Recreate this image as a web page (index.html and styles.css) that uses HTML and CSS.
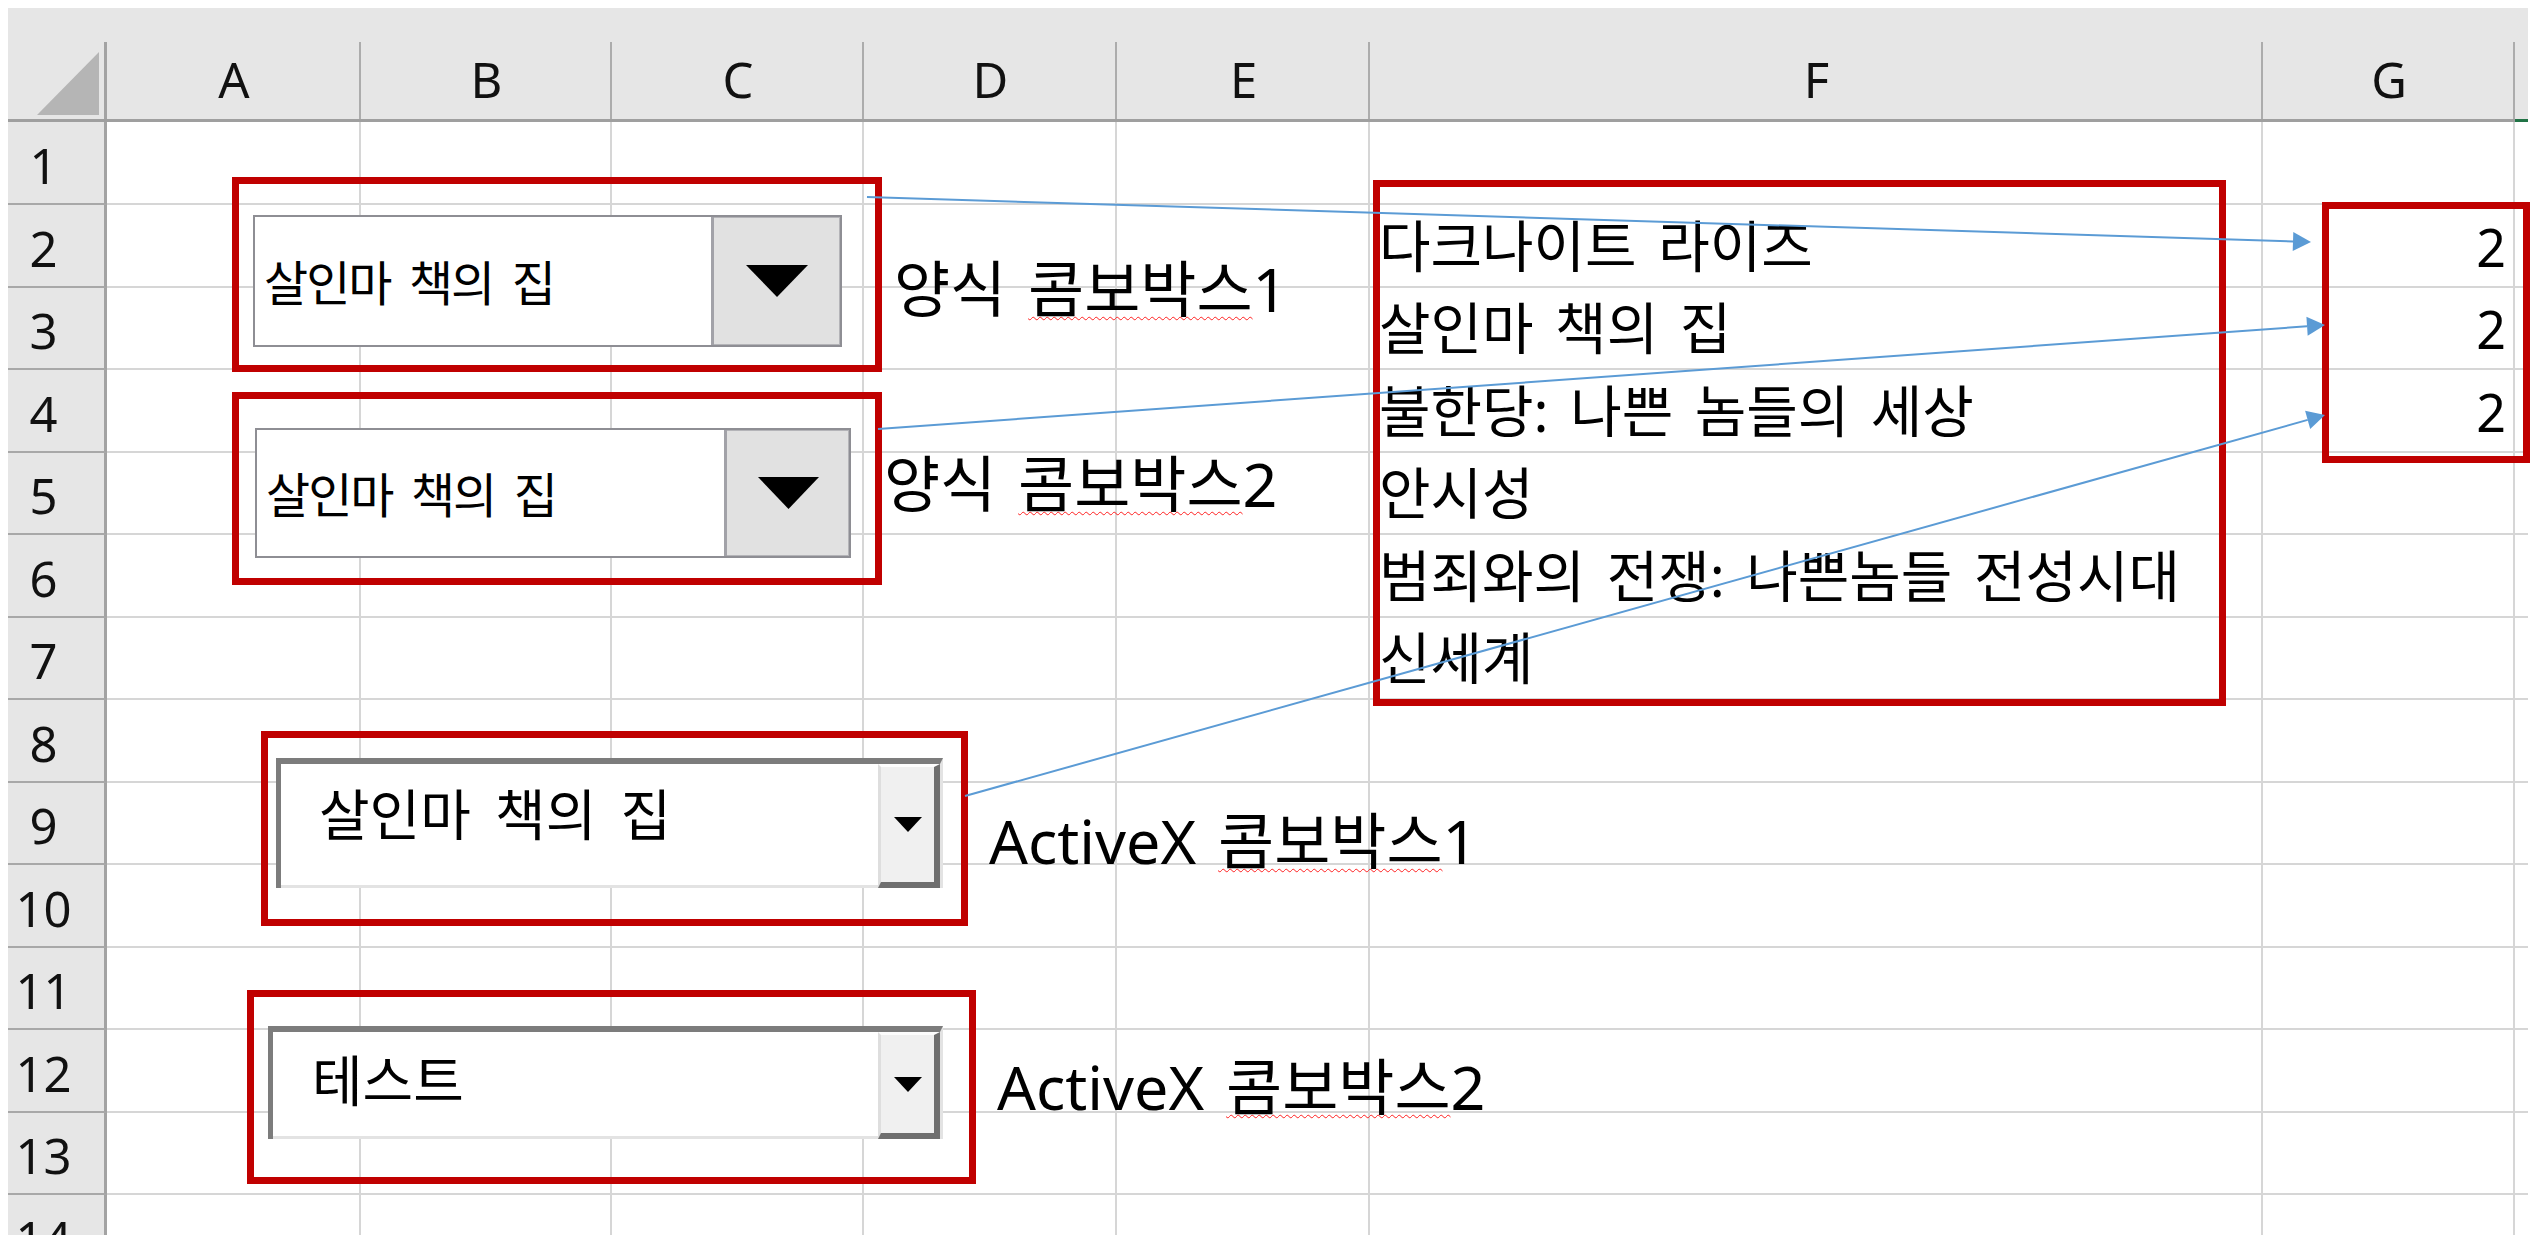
FILE: index.html
```html
<!DOCTYPE html>
<html lang="ko">
<head>
<meta charset="utf-8">
<title>콤보박스 예제</title>
<link rel="stylesheet" href="styles.css">
</head>
<body>
<div class="page">
  <div class="sheet">
    <div class="corner"><svg class="corner-tri" width="62" height="63" viewBox="0 0 62 63"><polygon points="0,63 62,63 62,0"/></svg></div>
    <div class="ch">A</div><div class="ch">B</div><div class="ch">C</div><div class="ch">D</div><div class="ch">E</div><div class="ch">F</div><div class="ch">G</div><div class="ch ch-sel"></div>

    <div class="rh">1</div><div class="c"></div><div class="c"></div><div class="c"></div><div class="c"></div><div class="c"></div><div class="c f"></div><div class="c g"></div><div class="c"></div>
    <div class="rh">2</div><div class="c"></div><div class="c"></div><div class="c"></div><div class="c"></div><div class="c"></div><div class="c f"><span class="t">다크나이트 라이즈</span></div><div class="c g"><span class="n">2</span></div><div class="c"></div>
    <div class="rh">3</div><div class="c"></div><div class="c"></div><div class="c"></div><div class="c"></div><div class="c"></div><div class="c f"><span class="t">살인마 책의 집</span></div><div class="c g"><span class="n">2</span></div><div class="c"></div>
    <div class="rh">4</div><div class="c"></div><div class="c"></div><div class="c"></div><div class="c"></div><div class="c"></div><div class="c f"><span class="t">불한당: 나쁜 놈들의 세상</span></div><div class="c g"><span class="n">2</span></div><div class="c"></div>
    <div class="rh">5</div><div class="c"></div><div class="c"></div><div class="c"></div><div class="c"></div><div class="c"></div><div class="c f"><span class="t">안시성</span></div><div class="c g"></div><div class="c"></div>
    <div class="rh">6</div><div class="c"></div><div class="c"></div><div class="c"></div><div class="c"></div><div class="c"></div><div class="c f"><span class="t">범죄와의 전쟁: 나쁜놈들 전성시대</span></div><div class="c g"></div><div class="c"></div>
    <div class="rh">7</div><div class="c"></div><div class="c"></div><div class="c"></div><div class="c"></div><div class="c"></div><div class="c f"><span class="t">신세계</span></div><div class="c g"></div><div class="c"></div>
    <div class="rh">8</div><div class="c"></div><div class="c"></div><div class="c"></div><div class="c"></div><div class="c"></div><div class="c f"></div><div class="c g"></div><div class="c"></div>
    <div class="rh">9</div><div class="c"></div><div class="c"></div><div class="c"></div><div class="c"></div><div class="c"></div><div class="c f"></div><div class="c g"></div><div class="c"></div>
    <div class="rh">10</div><div class="c"></div><div class="c"></div><div class="c"></div><div class="c"></div><div class="c"></div><div class="c f"></div><div class="c g"></div><div class="c"></div>
    <div class="rh">11</div><div class="c"></div><div class="c"></div><div class="c"></div><div class="c"></div><div class="c"></div><div class="c f"></div><div class="c g"></div><div class="c"></div>
    <div class="rh">12</div><div class="c"></div><div class="c"></div><div class="c"></div><div class="c"></div><div class="c"></div><div class="c f"></div><div class="c g"></div><div class="c"></div>
    <div class="rh">13</div><div class="c"></div><div class="c"></div><div class="c"></div><div class="c"></div><div class="c"></div><div class="c f"></div><div class="c g"></div><div class="c"></div>
    <div class="rh">14</div><div class="c"></div><div class="c"></div><div class="c"></div><div class="c"></div><div class="c"></div><div class="c f"></div><div class="c g"></div><div class="c"></div>
  </div>

  <!-- form controls -->
  <div class="form-combo fc1">
    <div class="form-field"><span>살인마 책의 집</span></div>
    <div class="form-btn"><svg width="62" height="32" viewBox="0 0 62 32"><polygon points="0,0 62,0 31,32"/></svg></div>
  </div>
  <div class="form-combo fc2">
    <div class="form-field"><span>살인마 책의 집</span></div>
    <div class="form-btn btn2"><svg width="61" height="32" viewBox="0 0 61 32"><polygon points="0,0 61,0 30.5,32"/></svg></div>
  </div>

  <!-- ActiveX controls -->
  <div class="ax-combo ax1">
    <div class="ax-field"><span>살인마 책의 집</span></div>
    <div class="ax-btn"><svg width="28" height="15" viewBox="0 0 28 15"><polygon points="0,0 28,0 14,15"/></svg></div>
  </div>
  <div class="ax-combo ax2">
    <div class="ax-field"><span>테스트</span></div>
    <div class="ax-btn"><svg width="28" height="15" viewBox="0 0 28 15"><polygon points="0,0 28,0 14,15"/></svg></div>
  </div>

  <!-- labels -->
  <div class="lbl lbl1">양식 <span class="sq">콤보박스</span>1</div>
  <div class="lbl lbl2">양식 <span class="sq">콤보박스</span>2</div>
  <div class="lbl lbl3">ActiveX <span class="sq">콤보박스</span>1</div>
  <div class="lbl lbl4">ActiveX <span class="sq">콤보박스</span>2</div>

  <!-- annotation boxes -->
  <div class="redbox rb1"></div>
  <div class="redbox rb2"></div>
  <div class="redbox rb3"></div>
  <div class="redbox rb4"></div>
  <div class="redbox rbf"></div>
  <div class="redbox rbg"></div>

  <svg class="arrows" width="2542" height="1247" viewBox="0 0 2542 1247">
    <line class="ln" x1="867" y1="197" x2="2293" y2="241.4"/>
    <polygon class="hd" points="2311,242 2292.7,250.9 2293.3,232.0"/>
    <line class="ln" x1="878" y1="429" x2="2307" y2="326.3"/>
    <polygon class="hd" points="2325,325 2307.7,335.8 2306.4,316.8"/>
    <line class="ln" x1="965" y1="796" x2="2307.7" y2="419.9"/>
    <polygon class="hd" points="2325,415 2310.2,429.0 2305.1,410.7"/>
  </svg>
</div>
</body>
</html>
```

FILE: styles.css
```css
* { box-sizing: border-box; }
html, body { margin: 0; padding: 0; background: #ffffff; }
body {
  font-family: "Noto Sans", "Noto Sans CJK KR", sans-serif;
  color: #000;
}
.page {
  position: relative;
  width: 2542px;
  height: 1247px;
  padding: 8px 0 0 8px;
  overflow: hidden;
  background: #fff;
}
.sheet {
  display: grid;
  width: 2520px;
  height: 1227px;
  overflow: hidden;
  grid-template-columns: 99px 254px 251px 252px 253px 253px 893px 252px 83px;
  grid-template-rows: 114px 83px 83px 82px 83px 82px 83px 82px 83px 82px 83px 82px 83px 82px 83px;
}

/* header row */
.corner, .ch {
  position: relative;
  background: #e6e6e6;
  border-bottom: 3px solid #9f9f9f;
}
.corner::after, .ch::after {
  content: "";
  position: absolute;
  right: 0;
  top: 34px;
  bottom: 0;
  width: 2px;
  background: #acacac;
}
.corner::after { width: 3px; background: #a3a3a3; }
.corner {
  display: flex;
  justify-content: flex-end;
  align-items: flex-end;
  padding: 0 8px 4px 0;
}
.corner-tri polygon { fill: #b5b5b5; }
.ch {
  display: flex;
  align-items: flex-end;
  justify-content: center;
  padding-bottom: 15px;
  font-size: 49px;
  line-height: 1;
  color: #111;
}
.ch-sel { border-bottom-color: #217346; }

/* row headers */
.rh {
  background: #e6e6e6;
  border-right: 3px solid #a3a3a3;
  border-bottom: 2px solid #a8a8a8;
  display: flex;
  align-items: center;
  justify-content: center;
  padding: 5px 25px 0 0;
  font-size: 49px;
  line-height: 1;
  color: #111;
}

/* cells */
.c {
  border-right: 2px solid #d6d6d6;
  border-bottom: 2px solid #d6d6d6;
  display: flex;
  align-items: flex-end;
  padding-bottom: 13px;
  white-space: nowrap;
}
.c .t {
  font-size: 56px;
  line-height: 1;
  word-spacing: 7px;
}
.c .n {
  font-size: 52px;
  line-height: 1;
}
.c.f { padding-left: 9px; }
.c.g { justify-content: flex-end; padding-right: 7px; }

/* form combo boxes */
.form-combo {
  position: absolute;
  display: flex;
  background: #fff;
  border: 2px solid #8e8e94;
}
.fc1 { left: 253px; top: 215px; width: 589px; height: 132px; }
.fc2 { left: 255px; top: 428px; width: 596px; height: 130px; }
.form-field {
  flex: 1;
  display: flex;
  align-items: center;
  padding: 4px 0 0 9px;
  font-size: 48px;
  line-height: 1;
  letter-spacing: -2px;
  word-spacing: 8px;
  white-space: nowrap;
}
.form-btn {
  width: 129px;
  background: #e1e1e1;
  border-left: 3px solid #a2a2a8;
  box-shadow: inset -1px -1px 0 #b4b4b8, inset 0 1px 0 #b4b4b8;
  display: flex;
  align-items: center;
  justify-content: center;
}
.form-btn.btn2 { width: 125px; }
.form-btn polygon { fill: #000; }

/* ActiveX combo boxes */
.ax-combo {
  position: absolute;
  display: flex;
  background: #fff;
  border-top: 6px solid #7c7c7c;
  border-left: 5px solid #7c7c7c;
  border-right: 3px solid #e3e3e3;
}
.ax1 { left: 276px; top: 758px; width: 667px; height: 130px; }
.ax2 { left: 268px; top: 1026px; width: 675px; height: 113px; }
.ax-field {
  flex: 1;
  border-bottom: 3px solid #e3e3e3;
  padding: 22px 0 0 38px;
  font-size: 55px;
  line-height: 1;
  word-spacing: 10px;
  white-space: nowrap;
}
.ax2 .ax-field { padding-top: 20px; padding-left: 39px; }
.ax-btn {
  width: 62px;
  background: #f0f0f0;
  border-top: 3px solid #fdfdfd;
  border-left: 3px solid #dedede;
  border-right: 6px solid #6f6f6f;
  border-bottom: 6px solid #6f6f6f;
  display: flex;
  align-items: center;
  justify-content: center;
}
.ax-btn polygon { fill: #000; }

/* labels */
.lbl {
  position: absolute;
  font-size: 61px;
  line-height: 1;
  white-space: nowrap;
  word-spacing: 6px;
}
.lbl1 { left: 894px; top: 258px; }
.lbl2 { left: 884px; top: 453px; }
.lbl3 { left: 989px; top: 810px; }
.lbl4 { left: 997px; top: 1056px; }
.sq {
  text-decoration: underline wavy #ff2020;
  text-decoration-thickness: 1px;
  text-underline-offset: 4px;
}

/* annotation boxes */
.redbox {
  position: absolute;
  border: 7px solid #c00000;
}
.rb1 { left: 232px; top: 177px; width: 650px; height: 195px; }
.rb2 { left: 232px; top: 392px; width: 650px; height: 193px; }
.rb3 { left: 261px; top: 731px; width: 707px; height: 195px; }
.rb4 { left: 247px; top: 990px; width: 729px; height: 194px; }
.rbf { left: 1373px; top: 180px; width: 853px; height: 526px; }
.rbg { left: 2322px; top: 202px; width: 208px; height: 261px; }

/* connector arrows */
.arrows {
  position: absolute;
  left: 0;
  top: 0;
  pointer-events: none;
}
.arrows .ln { stroke: #5b9bd5; stroke-width: 2; }
.arrows .hd { fill: #5b9bd5; }
```
